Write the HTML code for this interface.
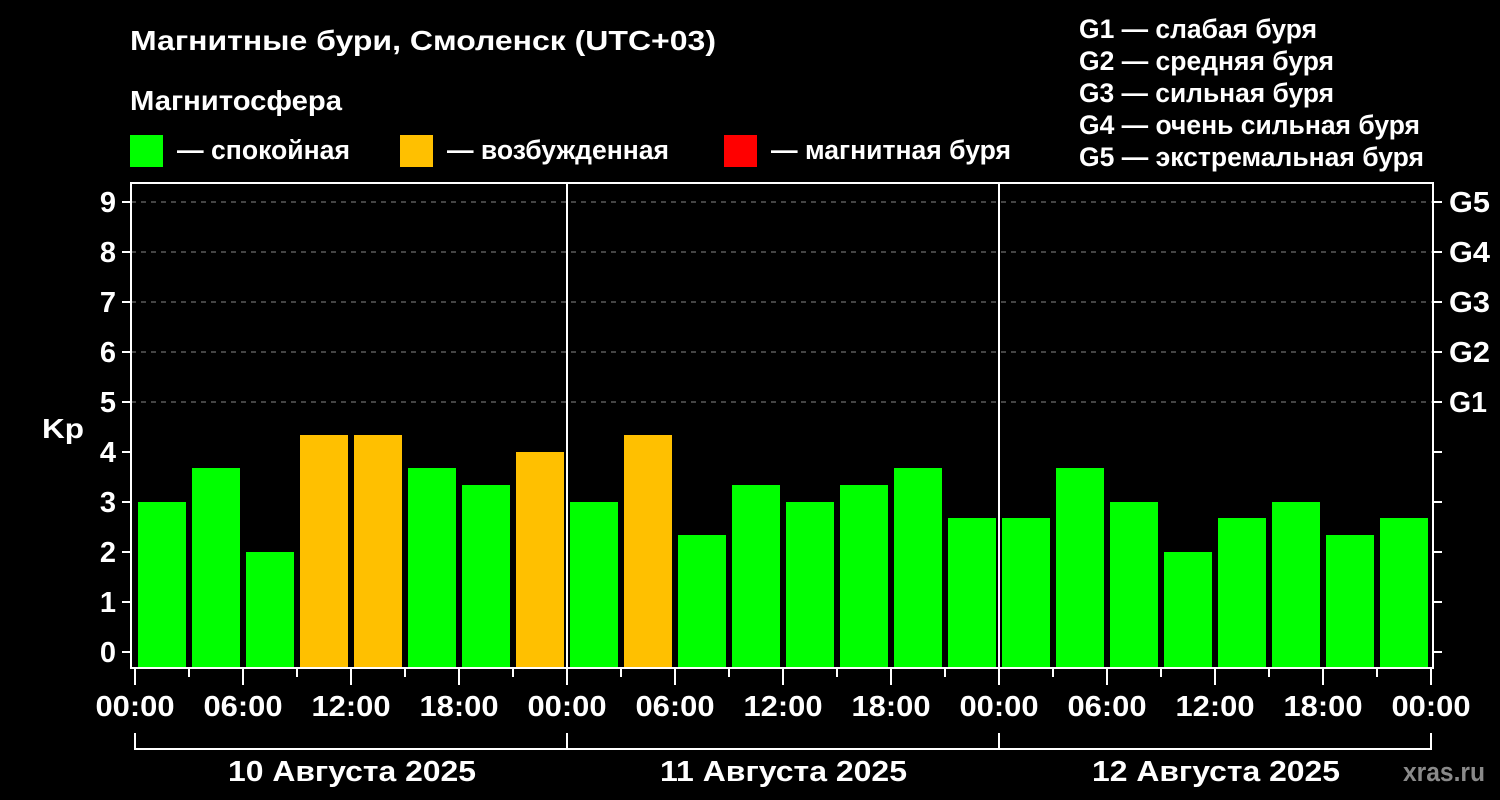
<!DOCTYPE html><html><head><meta charset="utf-8"><style>body{margin:0;background:#000}svg{display:block}text{font-family:"Liberation Sans",Arial,sans-serif;font-weight:bold;fill:#fff}</style></head><body>
<svg width="1500" height="800" xmlns="http://www.w3.org/2000/svg">
<rect width="1500" height="800" fill="#000"/>
<text x="130" y="50" font-size="28" textLength="586" lengthAdjust="spacingAndGlyphs">Магнитные бури, Смоленск (UTC+03)</text>
<text x="130" y="110" font-size="28" textLength="212" lengthAdjust="spacingAndGlyphs">Магнитосфера</text>
<rect x="130" y="135" width="33" height="32" fill="#00ff00"/><text x="177" y="159" font-size="27" textLength="173" lengthAdjust="spacingAndGlyphs">— спокойная</text>
<rect x="400" y="135" width="33" height="32" fill="#ffc000"/><text x="447" y="159" font-size="27" textLength="222" lengthAdjust="spacingAndGlyphs">— возбужденная</text>
<rect x="724" y="135" width="33" height="32" fill="#ff0000"/><text x="771" y="159" font-size="27" textLength="240" lengthAdjust="spacingAndGlyphs">— магнитная буря</text>
<g font-size="27"><text x="1079" y="38" textLength="238" lengthAdjust="spacingAndGlyphs">G1 — слабая буря</text><text x="1079" y="70" textLength="255" lengthAdjust="spacingAndGlyphs">G2 — средняя буря</text><text x="1079" y="102" textLength="255" lengthAdjust="spacingAndGlyphs">G3 — сильная буря</text><text x="1079" y="134" textLength="341" lengthAdjust="spacingAndGlyphs">G4 — очень сильная буря</text><text x="1079" y="166" textLength="345" lengthAdjust="spacingAndGlyphs">G5 — экстремальная буря</text></g>
<g stroke="#888" stroke-dasharray="5,5" stroke-width="1"><line x1="131" x2="1433" y1="202" y2="202"/><line x1="131" x2="1433" y1="252" y2="252"/><line x1="131" x2="1433" y1="302" y2="302"/><line x1="131" x2="1433" y1="352" y2="352"/><line x1="131" x2="1433" y1="402" y2="402"/></g>
<g fill="#00ff00">
<rect x="138" y="502" width="48" height="165"/>
<rect x="192" y="468" width="48" height="199"/>
<rect x="246" y="552" width="48" height="115"/>
<rect x="300" y="435" width="48" height="232" fill="#ffc000"/>
<rect x="354" y="435" width="48" height="232" fill="#ffc000"/>
<rect x="408" y="468" width="48" height="199"/>
<rect x="462" y="485" width="48" height="182"/>
<rect x="516" y="452" width="48" height="215" fill="#ffc000"/>
<rect x="570" y="502" width="48" height="165"/>
<rect x="624" y="435" width="48" height="232" fill="#ffc000"/>
<rect x="678" y="535" width="48" height="132"/>
<rect x="732" y="485" width="48" height="182"/>
<rect x="786" y="502" width="48" height="165"/>
<rect x="840" y="485" width="48" height="182"/>
<rect x="894" y="468" width="48" height="199"/>
<rect x="948" y="518" width="48" height="149"/>
<rect x="1002" y="518" width="48" height="149"/>
<rect x="1056" y="468" width="48" height="199"/>
<rect x="1110" y="502" width="48" height="165"/>
<rect x="1164" y="552" width="48" height="115"/>
<rect x="1218" y="518" width="48" height="149"/>
<rect x="1272" y="502" width="48" height="165"/>
<rect x="1326" y="535" width="48" height="132"/>
<rect x="1380" y="518" width="48" height="149"/>
</g>
<g stroke="#fff" stroke-width="2" fill="none"><path d="M131 183H1433V668H131Z"/><line x1="567" y1="183" x2="567" y2="668"/><line x1="999" y1="183" x2="999" y2="668"/>
<path d="M122 202H131M122 252H131M122 302H131M122 352H131M122 402H131M122 452H131M122 502H131M122 552H131M122 602H131M122 652H131M1433 202H1442M1433 252H1442M1433 302H1442M1433 352H1442M1433 402H1442M1433 452H1442M1433 502H1442M1433 552H1442M1433 602H1442M1433 652H1442"/>
<path d="M135 668V685M189 668V677M243 668V685M297 668V677M351 668V685M405 668V677M459 668V685M513 668V677M567 668V685M621 668V677M675 668V685M729 668V677M783 668V685M837 668V677M891 668V685M945 668V677M999 668V685M1053 668V677M1107 668V685M1161 668V677M1215 668V685M1269 668V677M1323 668V685M1377 668V677M1431 668V685"/>
<path d="M135 733V749H1431V733M567 733V749M999 733V749"/>
</g>
<g font-size="29" text-anchor="end"><text x="116" y="212">9</text><text x="116" y="262">8</text><text x="116" y="312">7</text><text x="116" y="362">6</text><text x="116" y="412">5</text><text x="116" y="462">4</text><text x="116" y="512">3</text><text x="116" y="562">2</text><text x="116" y="612">1</text><text x="116" y="662">0</text></g>
<text x="42" y="438" font-size="28" textLength="42" lengthAdjust="spacingAndGlyphs">Kp</text>
<g font-size="29"><text x="1449" y="212" textLength="41" lengthAdjust="spacingAndGlyphs">G5</text><text x="1449" y="262" textLength="41" lengthAdjust="spacingAndGlyphs">G4</text><text x="1449" y="312" textLength="41" lengthAdjust="spacingAndGlyphs">G3</text><text x="1449" y="362" textLength="41" lengthAdjust="spacingAndGlyphs">G2</text><text x="1449" y="412" textLength="38" lengthAdjust="spacingAndGlyphs">G1</text></g>
<g font-size="29" text-anchor="middle"><text x="135" y="716" textLength="79" lengthAdjust="spacingAndGlyphs">00:00</text><text x="243" y="716" textLength="79" lengthAdjust="spacingAndGlyphs">06:00</text><text x="351" y="716" textLength="79" lengthAdjust="spacingAndGlyphs">12:00</text><text x="459" y="716" textLength="79" lengthAdjust="spacingAndGlyphs">18:00</text><text x="567" y="716" textLength="79" lengthAdjust="spacingAndGlyphs">00:00</text><text x="675" y="716" textLength="79" lengthAdjust="spacingAndGlyphs">06:00</text><text x="783" y="716" textLength="79" lengthAdjust="spacingAndGlyphs">12:00</text><text x="891" y="716" textLength="79" lengthAdjust="spacingAndGlyphs">18:00</text><text x="999" y="716" textLength="79" lengthAdjust="spacingAndGlyphs">00:00</text><text x="1107" y="716" textLength="79" lengthAdjust="spacingAndGlyphs">06:00</text><text x="1215" y="716" textLength="79" lengthAdjust="spacingAndGlyphs">12:00</text><text x="1323" y="716" textLength="79" lengthAdjust="spacingAndGlyphs">18:00</text><text x="1431" y="716" textLength="79" lengthAdjust="spacingAndGlyphs">00:00</text></g>
<g font-size="29"><text x="228" y="781" textLength="248" lengthAdjust="spacingAndGlyphs">10 Августа 2025</text><text x="660" y="781" textLength="247" lengthAdjust="spacingAndGlyphs">11 Августа 2025</text><text x="1092" y="781" textLength="248" lengthAdjust="spacingAndGlyphs">12 Августа 2025</text></g>
<text x="1403" y="781" font-size="27" style="fill:#8a8a8a" textLength="82" lengthAdjust="spacingAndGlyphs">xras.ru</text>
</svg></body></html>
